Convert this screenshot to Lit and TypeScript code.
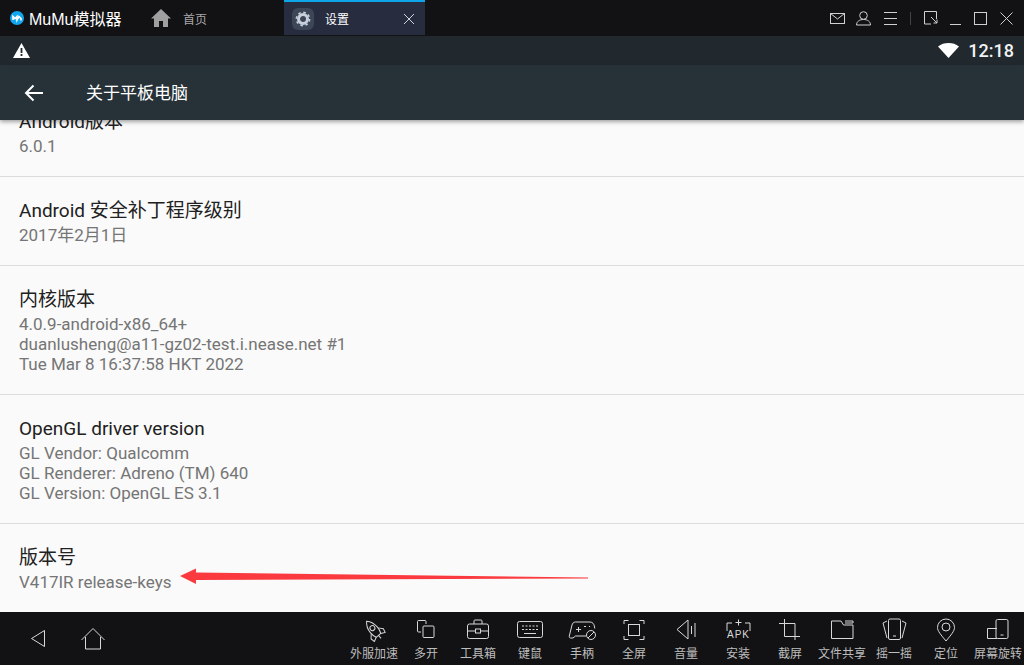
import { LitElement, html, css, svg } from "lit";
import { customElement } from "lit/decorators.js";

const s = (inner: unknown, w = 24, h = 24) => html`<svg width=${w} height=${h} viewBox="0 0 ${w} ${h}" fill="none" stroke="currentColor" stroke-width="1">${inner}</svg>`;

const tools: { label: string; icon: unknown }[] = [
  { label: "外服加速", icon: svg`<g transform="rotate(-40 12 12)"><path d="M12 .5C8.500 4 7.500 8 7.500 12c0 3 .8 5.500 1.500 7h6c.7-1.500 1.500-4 1.500-7 0-4-1-8-4.500-11.500z"/><circle cx="12" cy="9.500" r="2.500"/><path d="M7.500 13 4 17l1 4 4-2M16.500 13 20 17l-1 4-4-2M12 19v4"/></g>` },
  { label: "多开", icon: svg`<path d="M12 6V3.500a1 1 0 0 0-1-1H4.500a1 1 0 0 0-1 1V13a1 1 0 0 0 1 1H7"/><rect x="9" y="8" width="11" height="11.500" rx="1"/>` },
  { label: "工具箱", icon: svg`<rect x="1.500" y="6" width="21" height="14.500" rx="2"/><path d="M8 6V3a1 1 0 0 1 1-1h6a1 1 0 0 1 1 1v3M1.500 13H9.500M14.500 13H22.500"/><rect x="9.500" y="11" width="5" height="4"/>` },
  { label: "键鼠", icon: svg`<rect x="-.5" y="3.500" width="25" height="16" rx="2"/><path d="M4 8h16M4 11.500h16" stroke-dasharray="2 1.500"/><path d="M6 15.500h12"/>` },
  { label: "手柄", icon: svg`<path d="M16 18H5.500L3 20H.5C-.5 20-1 19-.7 18L2 7c.4-1.500 1.500-3 3.500-3H20c2.500 0 4 2 4.300 4l.5 2.500"/><path d="M6 11.500h5M8.500 9v5M14 8.500h2M19 8.500h1"/><circle cx="21" cy="17" r="4.500"/><path d="M18 20l6-6"/>` },
  { label: "全屏", icon: svg`<path d="M2 6V2.500h4.500M22 6V2.500h-4.500M2 18v3.500h4.500M22 18v3.500h-4.500"/><rect x="6.500" y="6.500" width="11" height="11"/>` },
  { label: "音量", icon: svg`<path d="M14 2 3 11.500 14 21zM17.500 8v8M21 5v14"/>` },
  { label: "安装", icon: svg`<path d="M1 13V5h5M24 13V5h-5M9.500 4.500h6M12.500 1.500v6" /><text x="12.500" y="20" fill="currentColor" stroke="none" font-size="10" text-anchor="middle" font-family="Liberation Sans" letter-spacing="1">APK</text>` },
  { label: "截屏", icon: svg`<path d="M6.500 1v17.500H22M1 5.500h16V19M17 22v-3"/>` },
  { label: "文件共享", icon: svg`<path d="M1.500 20.500V3h9.500l2.500 4H23v13.500zM15 3h8v2h-8" />` },
  { label: "摇一摇", icon: svg`<rect x="6.500" y="1" width="12" height="20.500" rx="1.500"/><path d="M5 3 1 5l4 15M20 3l4 2-4 15M11 18h3"/>` },
  { label: "定位", icon: svg`<path d="M12 23C7 17 3.500 13 3.500 9.500a8.500 8.500 0 0 1 17 0C20.500 13 17 17 12 23z"/><circle cx="12" cy="9" r="4"/>` },
  { label: "屏幕旋转", icon: svg`<path d="M11 20.500H1.500V10.500H11"/><rect x="10" y="1.500" width="12" height="19" rx="1.500"/><path d="M14.500 17h3"/>` },
];

const rows = [
  { t: "Android版本", d: ["6.0.1"] },
  { t: "Android 安全补丁程序级别", d: ["2017年2月1日"] },
  { t: "内核版本", d: ["4.0.9-android-x86_64+", "duanlusheng@a11-gz02-test.i.nease.net #1", "Tue Mar 8 16:37:58 HKT 2022"] },
  { t: "OpenGL driver version", d: ["GL Vendor: Qualcomm", "GL Renderer: Adreno (TM) 640", "GL Version: OpenGL ES 3.1"] },
  { t: "版本号", d: ["V417IR release-keys"] },
];

@customElement("app-root")
export class AppRoot extends LitElement {
  static styles = css`
    :host { display: flex; flex-direction: column; width: 1024px; height: 665px; position: relative; overflow: hidden;
      font-family: Roboto, "Noto Sans CJK SC", sans-serif; background: #fafafa; }
    svg { display: block; overflow: visible; }
    .titlebar { height: 36px; background: #121214; display: flex; align-items: stretch; color: #fff; flex: none; }
    .brand { width: 150px; display: flex; align-items: center; padding-left: 10px; gap: 5px; box-sizing: border-box; font-size: 16px; font-family: "Liberation Sans", "Noto Sans CJK SC", sans-serif; }
    .hometab { width: 134px; display: flex; align-items: center; gap: 12px; padding-left: 1px; box-sizing: border-box; font-size: 12px; color: #a8a8a8; }
    .settab { width: 141px; background: #272c3e; border-top: 2px solid #0ea5e9; margin-bottom: 1px; box-sizing: border-box; display: flex; align-items: center; padding: 0 11px 0 8px; font-size: 12px; color: #fff; }
    .gear { width: 22px; height: 22px; border-radius: 6px; background: #3c4657; display: flex; align-items: center; justify-content: center; margin-right: 11px; color: #c9d0dc; }
    .settab span { flex: 1; }
    .winctl { margin-left: auto; display: flex; align-items: center; color: #d0d0d0; padding-right: 11px; gap: 13px; }
    .winctl .mail { margin-right: -2px; }
    .sep { width: 1px; height: 13px; background: #444; }
    .minbtn { width: 11px; height: 13px; border-bottom: 1px solid currentColor; }
    .status { height: 29px; background: #21292e; flex: none; display: flex; align-items: center; justify-content: space-between; padding: 0 10px 0 13px; color: #fff; }
    .status .right { display: flex; align-items: center; gap: 9px; font-size: 18px; font-weight: 500; color: #f2f2f2; }
    .appbar { height: 55px; background: #263238; flex: none; display: flex; align-items: center; color: #fff; font-size: 17px; padding-left: 24px; gap: 42px; box-shadow: 0 2px 4px rgba(0,0,0,.35); position: relative; z-index: 1; }
    .appbar span { margin-top: -2px; }
    .list { flex: 1; min-height: 0; overflow: hidden; display: flex; flex-direction: column; justify-content: flex-end; }
    .row { height: 88px; padding: 0 19px; box-sizing: content-box; border-bottom: 1px solid #dcdcdc; flex: none; }
    .row:last-child { border-bottom: none; }
    .row.l3 { height: 128px; }
    .inner { padding-top: 19px; }
    .t { font-size: 19px; line-height: 29px; color: #212121; }
    .d { font-size: 17px; line-height: 20px; color: #757575; }
    .nav { height: 53px; background: #121214; flex: none; display: flex; color: #d8d8d8; }
    .navl { width: 348px; display: flex; align-items: center; padding: 0 0 0 29px; gap: 34px; box-sizing: border-box; }
    .tools { display: grid; grid-template-columns: repeat(13, 52px); }
    .tool { display: flex; flex-direction: column; align-items: center; padding-top: 6px; }
    .tool label { font-size: 12px; line-height: 14px; color: #bdbdbd; margin-top: 5px; white-space: nowrap; }
    .arrow { position: absolute; left: 0; top: 0; pointer-events: none; }
  `;

  render() {
    return html`
      <div class="titlebar">
        <div class="brand">
          <svg width="14" height="14" viewBox="0 0 14 14"><circle cx="7" cy="7" r="7" fill="#12a6ee"/><path d="M3 9V5.500l2 2 2-2 0 3.500 2-3.500 2 2v2" fill="none" stroke="#fff" stroke-width="1.600"/></svg>
          <span>MuMu模拟器</span>
        </div>
        <div class="hometab">
          <svg width="20" height="18" viewBox="0 0 20 18"><path d="M10 0 0 9.500h3V18h5v-6h4v6h5V9.500h3z" fill="#a0a0a0"/></svg>
          <span>首页</span>
        </div>
        <div class="settab">
          <div class="gear"><svg width="16" height="16" viewBox="0 0 16 16" fill="none"><circle cx="8" cy="8" r="4.500" stroke="currentColor" stroke-width="3"/><circle cx="8" cy="8" r="6.600" stroke="currentColor" stroke-width="1.600" stroke-dasharray="2.500 2.700"/></svg></div>
          <span>设置</span>
          <svg width="10" height="10" viewBox="0 0 10 10" stroke="#cfd3da" stroke-width="1"><path d="M0 0l10 10M10 0 0 10"/></svg>
        </div>
        <div class="winctl">
          <span class="mail">${s(svg`<rect x=".5" y="1.500" width="14" height="10"/><path d="M.5 1.500 7.500 7l7-5.500"/>`, 15, 13)}</span>
          ${s(svg`<circle cx="7.500" cy="4.500" r="3.800"/><path d="M.5 14c0-3.500 3-5.500 7-5.500s7 2 7 5.500z"/>`, 15, 14)}
          ${s(svg`<path d="M0 .5h13M0 6.500h13M0 12.500h13"/>`, 13, 13)}
          <div class="sep"></div>
          ${s(svg`<path d="M12.500 8V.5H.5v12.500H7M7 6l6 6M13 8.500V12H9.500"/>`, 13, 14)}
          <div class="minbtn"></div>
          ${s(svg`<rect x=".5" y=".5" width="12" height="12"/>`, 13, 13)}
          ${s(svg`<path d="M.5.500l12 12M12.500.5l-12 12"/>`, 13, 13)}
        </div>
      </div>
      <div class="status">
        <svg width="17" height="15" viewBox="0 0 17 15"><path d="M8.500 0 17 15H0z" fill="#fff"/><path d="M8.500 5v5M8.500 11v2" stroke="#21292e" stroke-width="1.800"/></svg>
        <div class="right">
          <svg width="21" height="15" viewBox="0 0 21 15"><path d="M10.500 15 0 3.500C3 1 6.500 0 10.500 0S18 1 21 3.500z" fill="#fff"/></svg>
          <span>12:18</span>
        </div>
      </div>
      <div class="appbar">
        <svg width="20" height="18" viewBox="0 0 20 18" fill="none" stroke="#fff" stroke-width="2"><path d="M19 9H2M9.500 1.500 2 9l7.500 7.500"/></svg>
        <span>关于平板电脑</span>
      </div>
      <div class="list">
        ${rows.map((r) => html`<div class="row ${r.d.length > 1 ? "l3" : ""}"><div class="inner"><div class="t">${r.t}</div>${r.d.map((x) => html`<div class="d">${x}</div>`)}</div></div>`)}
      </div>
      <div class="nav">
        <div class="navl">
          ${s(svg`<path d="M15.500 2.500 2.500 10.500l13 8z" stroke-linejoin="round"/>`, 18, 21)}
          ${s(svg`<path d="M.5 13 12 1.500 23.500 13M4.500 10v12h15V10"/>`, 24, 23)}
        </div>
        <div class="tools">
          ${tools.map((t) => html`<div class="tool">${s(t.icon)}<label>${t.label}</label></div>`)}
        </div>
      </div>
      <svg class="arrow" width="1024" height="665"><path d="M180 576 196 568.500V572.500L588 577.500V578.500L196 580V584z" fill="#fb3a3f"/></svg>
    `;
  }
}
